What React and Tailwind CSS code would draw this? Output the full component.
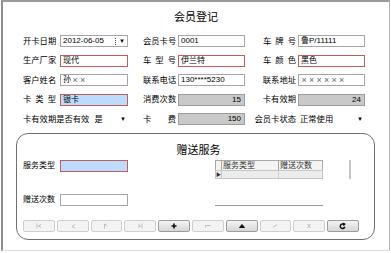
import React from "react";

const FONT = "font-['Liberation_Sans','Noto_Sans_CJK_SC',sans-serif]";

// label text, optionally spread across a fixed width (e.g. "车 牌 号")
const Label = ({ text, spread = false, className = "" }) => {
  if (spread) {
    return (
      <span className={`flex w-[33px] justify-between ${className}`}>
        {text.split("").map((c, i) => (
          <span key={i}>{c}</span>
        ))}
      </span>
    );
  }
  return <span className={`whitespace-nowrap ${className}`}>{text}</span>;
};

const Box = ({ value = "", kind = "plain", className = "" }) => {
  const styles = {
    plain: "bg-white border border-[#a7a7a7]",
    red: "bg-white border border-[#c85a5a]",
    blue: "bg-[#bcdcff] border border-[#c85a5a]",
    gray: "bg-[#c9c9c9] border border-[#9d9d9d] justify-end pr-[3px]",
  };
  return (
    <div
      className={`flex h-[12px] items-center pl-[2px] text-[8px] leading-none text-black ${styles[kind]} ${className}`}
    >
      {value}
    </div>
  );
};

// wide "×" marks as in the masked name / address
const Marks = ({ n }) => (
  <span className="flex gap-[1px] text-[9px] text-[#666]">
    {Array.from({ length: n }).map((_, i) => (
      <span key={i} className="w-[6.5px] text-center">×</span>
    ))}
  </span>
);

const Select = ({ value, className = "" }) => (
  <div
    className={`flex h-[12px] items-center justify-between bg-white pl-[2px] pr-[2px] text-[8.3px] leading-none ${className}`}
  >
    <span>{value}</span>
    <span className="text-[6px]">▼</span>
  </div>
);

const DatePicker = () => (
  <div className="flex h-[12px] w-[68px] items-center border border-[#a7a7a7] bg-white pl-[2px] text-[8px] leading-none">
    <span className="flex-1">2012-06-05</span>
    <span className="mr-[3px] h-[7px] border-l border-dotted border-[#555]" />
    <span className="mr-[2px] text-[6px]">▼</span>
  </div>
);

const Cell = ({ children, className = "" }) => (
  <div className={`flex h-[12px] items-center ${className}`}>{children}</div>
);

const Ico = ({ children, dim }) => (
  <svg
    width="8"
    height="8"
    viewBox="0 0 8 8"
    fill="none"
    stroke={dim ? "#bdbdbd" : "#111"}
    strokeWidth="1"
  >
    {children}
  </svg>
);

const buttons = [
  { dim: true, icon: <><path d="M2 1.5v5" /><path d="M6 2.5 3.5 4 6 5.5" /></> },
  { dim: true, icon: <path d="M6 2.5 3 4.5 6 6" /> },
  { dim: true, icon: <><path d="M2.5 6.5V2" /><path d="M2.5 2 5.5 4" /></> },
  { dim: true, icon: <><path d="M6 1.5v5" /><path d="M2 2.5 4.5 4 2 5.5" /></> },
  { dim: false, icon: <path d="M4 1.5v5M1.5 4h5" strokeWidth="1.6" /> },
  { dim: true, icon: <path d="M1.5 3.5h5M1.5 3.5v2" /> },
  { dim: false, icon: <path d="M1.5 5.5h5L4 2.5z" fill="#111" /> },
  { dim: true, icon: <path d="M2 5.5 6 2.5" /> },
  { dim: true, icon: <path d="M2.5 2 5.5 6M5.5 2 2.5 6" /> },
  {
    dim: false,
    icon: (
      <>
        <path d="M5.8 4.8A2.3 2.3 0 1 1 5 2.4" strokeWidth="1.5" />
        <path d="M4.2 1 6.3 2.2 4.6 3.6z" fill="#111" />
      </>
    ),
  },
];

export default function App() {
  return (
    <div className={`h-[253px] w-[391px] bg-white text-[8.3px] text-black ${FONT}`}>
      <div className="ml-[1px] h-[251px] w-[389px] border-t-2 border-r border-b border-l-2 border-t-[#9a9a9a] border-r-[#b5b5b5] border-b-[#dcdcdc] border-l-[#8e8e8e]">
        {/* title */}
        <div className="pt-[8px] text-center text-[11px] leading-[14px]">会员登记</div>

        {/* main form */}
        <div className="mt-[11px] grid grid-cols-[37px_68px_50px_67px_53px_67px] gap-y-[7.5px] pl-[20px] leading-none">
          <Cell><Label text="开卡日期" /></Cell>
          <DatePicker />
          <Cell className="pl-[15px]"><Label text="会员卡号" /></Cell>
          <Box value="0001" />
          <Cell className="justify-end pr-[2px]"><Label text="车牌号" spread /></Cell>
          <Box value="鲁P/11111" />

          <Cell><Label text="生产厂家" /></Cell>
          <Box value="现代" kind="red" />
          <Cell className="pl-[15px]"><Label text="车型号" spread /></Cell>
          <Box value="伊兰特" kind="red" />
          <Cell className="justify-end pr-[2px]"><Label text="车颜色" spread /></Cell>
          <Box value="黑色" kind="red" />

          <Cell><Label text="客户姓名" /></Cell>
          <Box value={<><span className="mr-[1px]">孙</span><Marks n={2} /></>} />
          <Cell className="pl-[15px]"><Label text="联系电话" /></Cell>
          <Box value="130****5230" />
          <Cell className="justify-end pr-[2px]"><Label text="联系地址" /></Cell>
          <Box value={<Marks n={6} />} />

          <Cell><Label text="卡类型" spread /></Cell>
          <Box value="银卡" kind="blue" />
          <Cell className="pl-[15px]"><Label text="消费次数" /></Cell>
          <Box value="15" kind="gray" />
          <Cell className="justify-end pr-[2px]"><Label text="卡有效期" /></Cell>
          <Box value="24" kind="gray" />

          <Cell className="col-span-2">
            <Label text="卡有效期是否有效" />
            <Select value="是" className="ml-[3px] w-[38px]" />
          </Cell>
          <Cell className="pl-[15px]"><Label text="卡费" spread /></Cell>
          <Box value="150" kind="gray" />
          <Cell className="justify-end pr-[2px]"><Label text="会员卡状态" /></Cell>
          <Select value="正常使用" className="w-[67px]" />
        </div>

        {/* gift service group */}
        <div className="mt-[8px] ml-[13px] h-[107px] w-[359px] rounded-[12px] border border-[#6f6f6f] pl-[6px]">
          <div className="pt-[9px] text-center text-[11px] leading-[14px]">赠送服务</div>
          <div className="mt-[3px] flex">
            <div className="flex w-[105px] flex-col gap-[22px]">
              <div className="flex items-center">
                <span className="w-[37px] text-[8px]">服务类型</span>
                <Box kind="blue" className="w-[68px]" />
              </div>
              <div className="flex items-center">
                <span className="w-[37px] text-[8px]">赠送次数</span>
                <Box className="w-[68px]" />
              </div>
            </div>
            <div className="ml-[87px] flex">
              <div className="flex h-[46px] w-[108px] flex-col border-b border-[#9a9a9a]">
                <div className="flex h-[10px] border-t border-l border-[#a8a8a8] bg-[#f4f4f4] text-[8px] leading-none text-[#333]">
                  <div className="w-[6px] border-r border-[#a8a8a8]" />
                  <div className="w-[57px] border-r border-[#a8a8a8] pl-[1px] pt-[1px]">服务类型</div>
                  <div className="flex-1 border-r border-[#a8a8a8] pl-[1px] pt-[1px]">赠送次数</div>
                </div>
                <div className="flex h-[9px] border-t border-b border-l border-[#c6c6c6] bg-[#ececec]">
                  <div className="flex w-[6px] items-center justify-center border-r border-[#c6c6c6] text-[5px] text-[#333]">▶</div>
                  <div className="w-[57px] border-r border-[#d0d0d0]" />
                  <div className="flex-1 border-r border-[#c6c6c6]" />
                </div>
              </div>
              <div className="ml-[26px] h-[19px] w-[2px] bg-[#c4c4c4]" />
            </div>
          </div>

          {/* navigator buttons */}
          <div className="mt-[14px] flex gap-[2px]">
            {buttons.map((b, i) => (
              <div
                key={i}
                className={`flex h-[12px] w-[31.8px] items-center justify-center rounded-[2px] border ${
                  b.dim
                    ? "border-[#cfcfcf] bg-[#f3f3f3]"
                    : "border-[#9c9c9c] bg-gradient-to-b from-[#f4f4f4] to-[#d6d6d6]"
                }`}
              >
                <Ico dim={b.dim}>{b.icon}</Ico>
              </div>
            ))}
          </div>
        </div>
      </div>
    </div>
  );
}
